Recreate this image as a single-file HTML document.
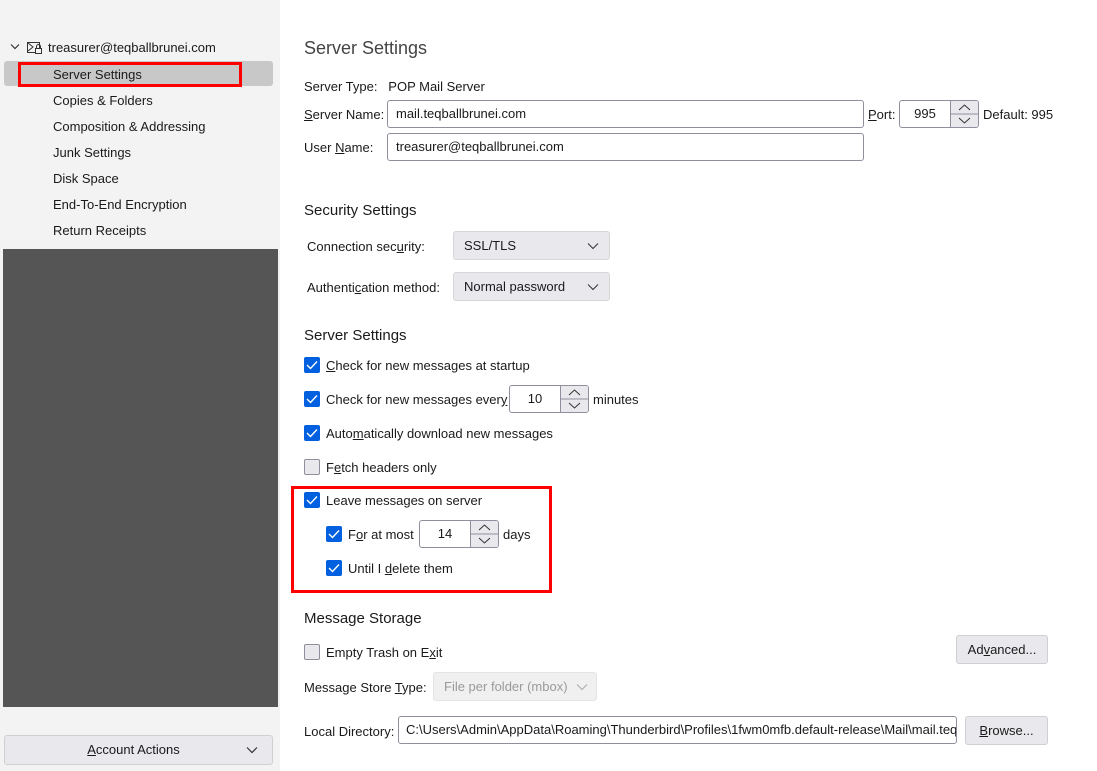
<!DOCTYPE html><html><head><meta charset="utf-8"><style>
*{box-sizing:border-box;margin:0;padding:0}
body{width:1097px;height:771px;background:#fff;font-family:"Liberation Sans",sans-serif;font-size:13px;color:#1a1a1a;position:relative;overflow:hidden}
.a{position:absolute;white-space:nowrap}
.side{position:absolute;left:0;top:0;width:280px;height:771px;background:#f3f3f3}
.dark{position:absolute;left:3px;top:249px;width:275px;height:458px;background:#555}
.inp{position:absolute;border:1px solid #8f8f9d;border-radius:3px;background:#fff;padding-left:8px;line-height:26px;height:28px;white-space:nowrap;overflow:hidden}
.num{position:absolute;left:0;top:0;width:50px;text-align:center}
.sel{position:absolute;background:#e9e9ed;border:1px solid #d6d6d6;border-radius:3px;height:29px;line-height:27px;padding-left:10px}
.sel svg{position:absolute;right:10px;top:10px}
.cb{position:absolute;width:16px;height:16px;border-radius:2px;background:#0060df}
.cb.off{background:#e9e9ed;border:1px solid #8f8f9d}
.cb svg{position:absolute;left:2px;top:3px}
.spin{position:absolute;width:28px;border-left:1px solid #8f8f9d}
.btn{position:absolute;background:#e9e9ed;border:1px solid #d0d0d0;border-radius:3px;text-align:center}
h3{position:absolute;font-weight:normal;font-size:15px;color:#1a1a1a}
u{text-decoration:underline}
</style></head><body>
<div class="side"></div>
<div class="dark"></div>
<svg class="a" style="left:10px;top:43px" width="10" height="8"><path d="M1 1.5L5 5.5L9 1.5" stroke="#333" fill="none" stroke-width="1.2"/></svg>
<svg class="a" style="left:27px;top:41px" width="16" height="13"><rect x="0.5" y="1.5" width="12" height="10" fill="none" stroke="#333"/><path d="M1 2L6 6L1 10" fill="none" stroke="#333"/><rect x="8.5" y="7.5" width="6" height="5" fill="#f3f3f3" stroke="#333"/><path d="M9.5 7.5V5.5a2 2 0 0 1 4 0v2" fill="none" stroke="#333"/></svg>
<div class="a" style="left:48px;top:40px">treasurer@teqballbrunei.com</div>
<div class="a" style="left:4px;top:61px;width:269px;height:25px;background:#c8c8c8;border-radius:3px"></div>
<div class="a" style="left:18px;top:62px;width:224px;height:25px;border:3px solid #f00"></div>
<div class="a" style="left:53px;top:67px">Server Settings</div>
<div class="a" style="left:53px;top:93px">Copies &amp; Folders</div>
<div class="a" style="left:53px;top:119px">Composition &amp; Addressing</div>
<div class="a" style="left:53px;top:145px">Junk Settings</div>
<div class="a" style="left:53px;top:171px">Disk Space</div>
<div class="a" style="left:53px;top:197px">End-To-End Encryption</div>
<div class="a" style="left:53px;top:223px">Return Receipts</div>
<div class="btn" style="left:4px;top:735px;width:269px;height:30px;line-height:28px"><span style="margin-left:-10px"><u>A</u>ccount Actions</span><svg style="position:absolute;right:14px;top:10px" width="12" height="8"><path d="M1 1.5L6 6.5L11 1.5" stroke="#333" fill="none" stroke-width="1.2"/></svg></div>

<h3 style="left:304px;top:38px;font-size:18px;color:#444">Server Settings</h3>
<div class="a" style="left:304px;top:79px">Server Type:&nbsp;&nbsp; POP Mail Server</div>
<div class="a" style="left:304px;top:107px"><u>S</u>erver Name:</div>
<div class="inp" style="left:387px;top:100px;width:477px">mail.teqballbrunei.com</div>
<div class="a" style="left:868px;top:107px"><u>P</u>ort:</div>
<div class="inp" style="left:899px;top:100px;width:80px"><span class="num">995</span><div class="spin" style="left:50px;top:0;height:26px;background:#e9e9ed"><svg width="27" height="26"><path d="M8 9L13.5 4L19 9M8 17L13.5 22L19 17" stroke="#333" fill="none"/><line x1="0" y1="13" x2="27" y2="13" stroke="#8f8f9d"/></svg></div></div>
<div class="a" style="left:983px;top:107px">Default: 995</div>
<div class="a" style="left:304px;top:140px">User <u>N</u>ame:</div>
<div class="inp" style="left:387px;top:133px;width:477px">treasurer@teqballbrunei.com</div>

<h3 style="left:304px;top:202px">Security Settings</h3>
<div class="a" style="left:307px;top:239px">Connection sec<u>u</u>rity:</div>
<div class="sel" style="left:453px;top:231px;width:157px">SSL/TLS<svg width="12" height="8"><path d="M1 1.5L6 6.5L11 1.5" stroke="#333" fill="none"/></svg></div>
<div class="a" style="left:307px;top:280px">Authenti<u>c</u>ation method:</div>
<div class="sel" style="left:453px;top:272px;width:157px">Normal password<svg width="12" height="8"><path d="M1 1.5L6 6.5L11 1.5" stroke="#333" fill="none"/></svg></div>

<h3 style="left:304px;top:327px">Server Settings</h3>
<div class="cb" style="left:304px;top:357px"><svg width="12" height="10"><path d="M1 5L4.5 8.5L11 1.5" stroke="#fff" fill="none" stroke-width="1.4"/></svg></div>
<div class="a" style="left:326px;top:358px"><u>C</u>heck for new messages at startup</div>
<div class="cb" style="left:304px;top:391px"><svg width="12" height="10"><path d="M1 5L4.5 8.5L11 1.5" stroke="#fff" fill="none" stroke-width="1.4"/></svg></div>
<div class="a" style="left:326px;top:392px">Check for new messages ever<u>y</u></div>
<div class="inp" style="left:509px;top:385px;width:80px"><span class="num">10</span><div class="spin" style="left:50px;top:0;height:26px;background:#e9e9ed"><svg width="27" height="26"><path d="M8 9L13.5 4L19 9M8 17L13.5 22L19 17" stroke="#333" fill="none"/><line x1="0" y1="13" x2="27" y2="13" stroke="#8f8f9d"/></svg></div></div>
<div class="a" style="left:593px;top:392px">minutes</div>
<div class="cb" style="left:304px;top:425px"><svg width="12" height="10"><path d="M1 5L4.5 8.5L11 1.5" stroke="#fff" fill="none" stroke-width="1.4"/></svg></div>
<div class="a" style="left:326px;top:426px">Auto<u>m</u>atically download new messages</div>
<div class="cb off" style="left:304px;top:459px"></div>
<div class="a" style="left:326px;top:460px">F<u>e</u>tch headers only</div>
<div class="a" style="left:291px;top:486px;width:261px;height:107px;border:3px solid #f00"></div>
<div class="cb" style="left:304px;top:492px"><svg width="12" height="10"><path d="M1 5L4.5 8.5L11 1.5" stroke="#fff" fill="none" stroke-width="1.4"/></svg></div>
<div class="a" style="left:326px;top:493px">Leave messa<u>g</u>es on server</div>
<div class="cb" style="left:326px;top:526px"><svg width="12" height="10"><path d="M1 5L4.5 8.5L11 1.5" stroke="#fff" fill="none" stroke-width="1.4"/></svg></div>
<div class="a" style="left:348px;top:527px">F<u>o</u>r at most</div>
<div class="inp" style="left:419px;top:520px;width:80px"><span class="num">14</span><div class="spin" style="left:50px;top:0;height:26px;background:#e9e9ed"><svg width="27" height="26"><path d="M8 9L13.5 4L19 9M8 17L13.5 22L19 17" stroke="#333" fill="none"/><line x1="0" y1="13" x2="27" y2="13" stroke="#8f8f9d"/></svg></div></div>
<div class="a" style="left:503px;top:527px">days</div>
<div class="cb" style="left:326px;top:560px"><svg width="12" height="10"><path d="M1 5L4.5 8.5L11 1.5" stroke="#fff" fill="none" stroke-width="1.4"/></svg></div>
<div class="a" style="left:348px;top:561px">Until I <u>d</u>elete them</div>

<h3 style="left:304px;top:610px">Message Storage</h3>
<div class="cb off" style="left:304px;top:644px"></div>
<div class="a" style="left:326px;top:645px">Empty Trash on E<u>x</u>it</div>
<div class="btn" style="left:956px;top:635px;width:92px;height:29px;line-height:27px">Ad<u>v</u>anced...</div>
<div class="a" style="left:304px;top:680px">Message Store <u>T</u>ype:</div>
<div class="sel" style="left:433px;top:672px;width:164px;color:#9a9a9a;background:#f0f0f0;border-color:#e4e4e4">File per folder (mbox)<svg width="12" height="8" style="right:8px"><path d="M1 1.5L6 6.5L11 1.5" stroke="#aaa" fill="none"/></svg></div>
<div class="a" style="left:304px;top:724px">Local Directory:</div>
<div class="inp" style="left:398px;top:716px;width:559px;padding-left:7px">C:\Users\Admin\AppData\Roaming\Thunderbird\Profiles\1fwm0mfb.default-release\Mail\mail.teqballbrunei.com</div>
<div class="btn" style="left:965px;top:716px;width:83px;height:29px;line-height:27px"><u>B</u>rowse...</div>
</body></html>
